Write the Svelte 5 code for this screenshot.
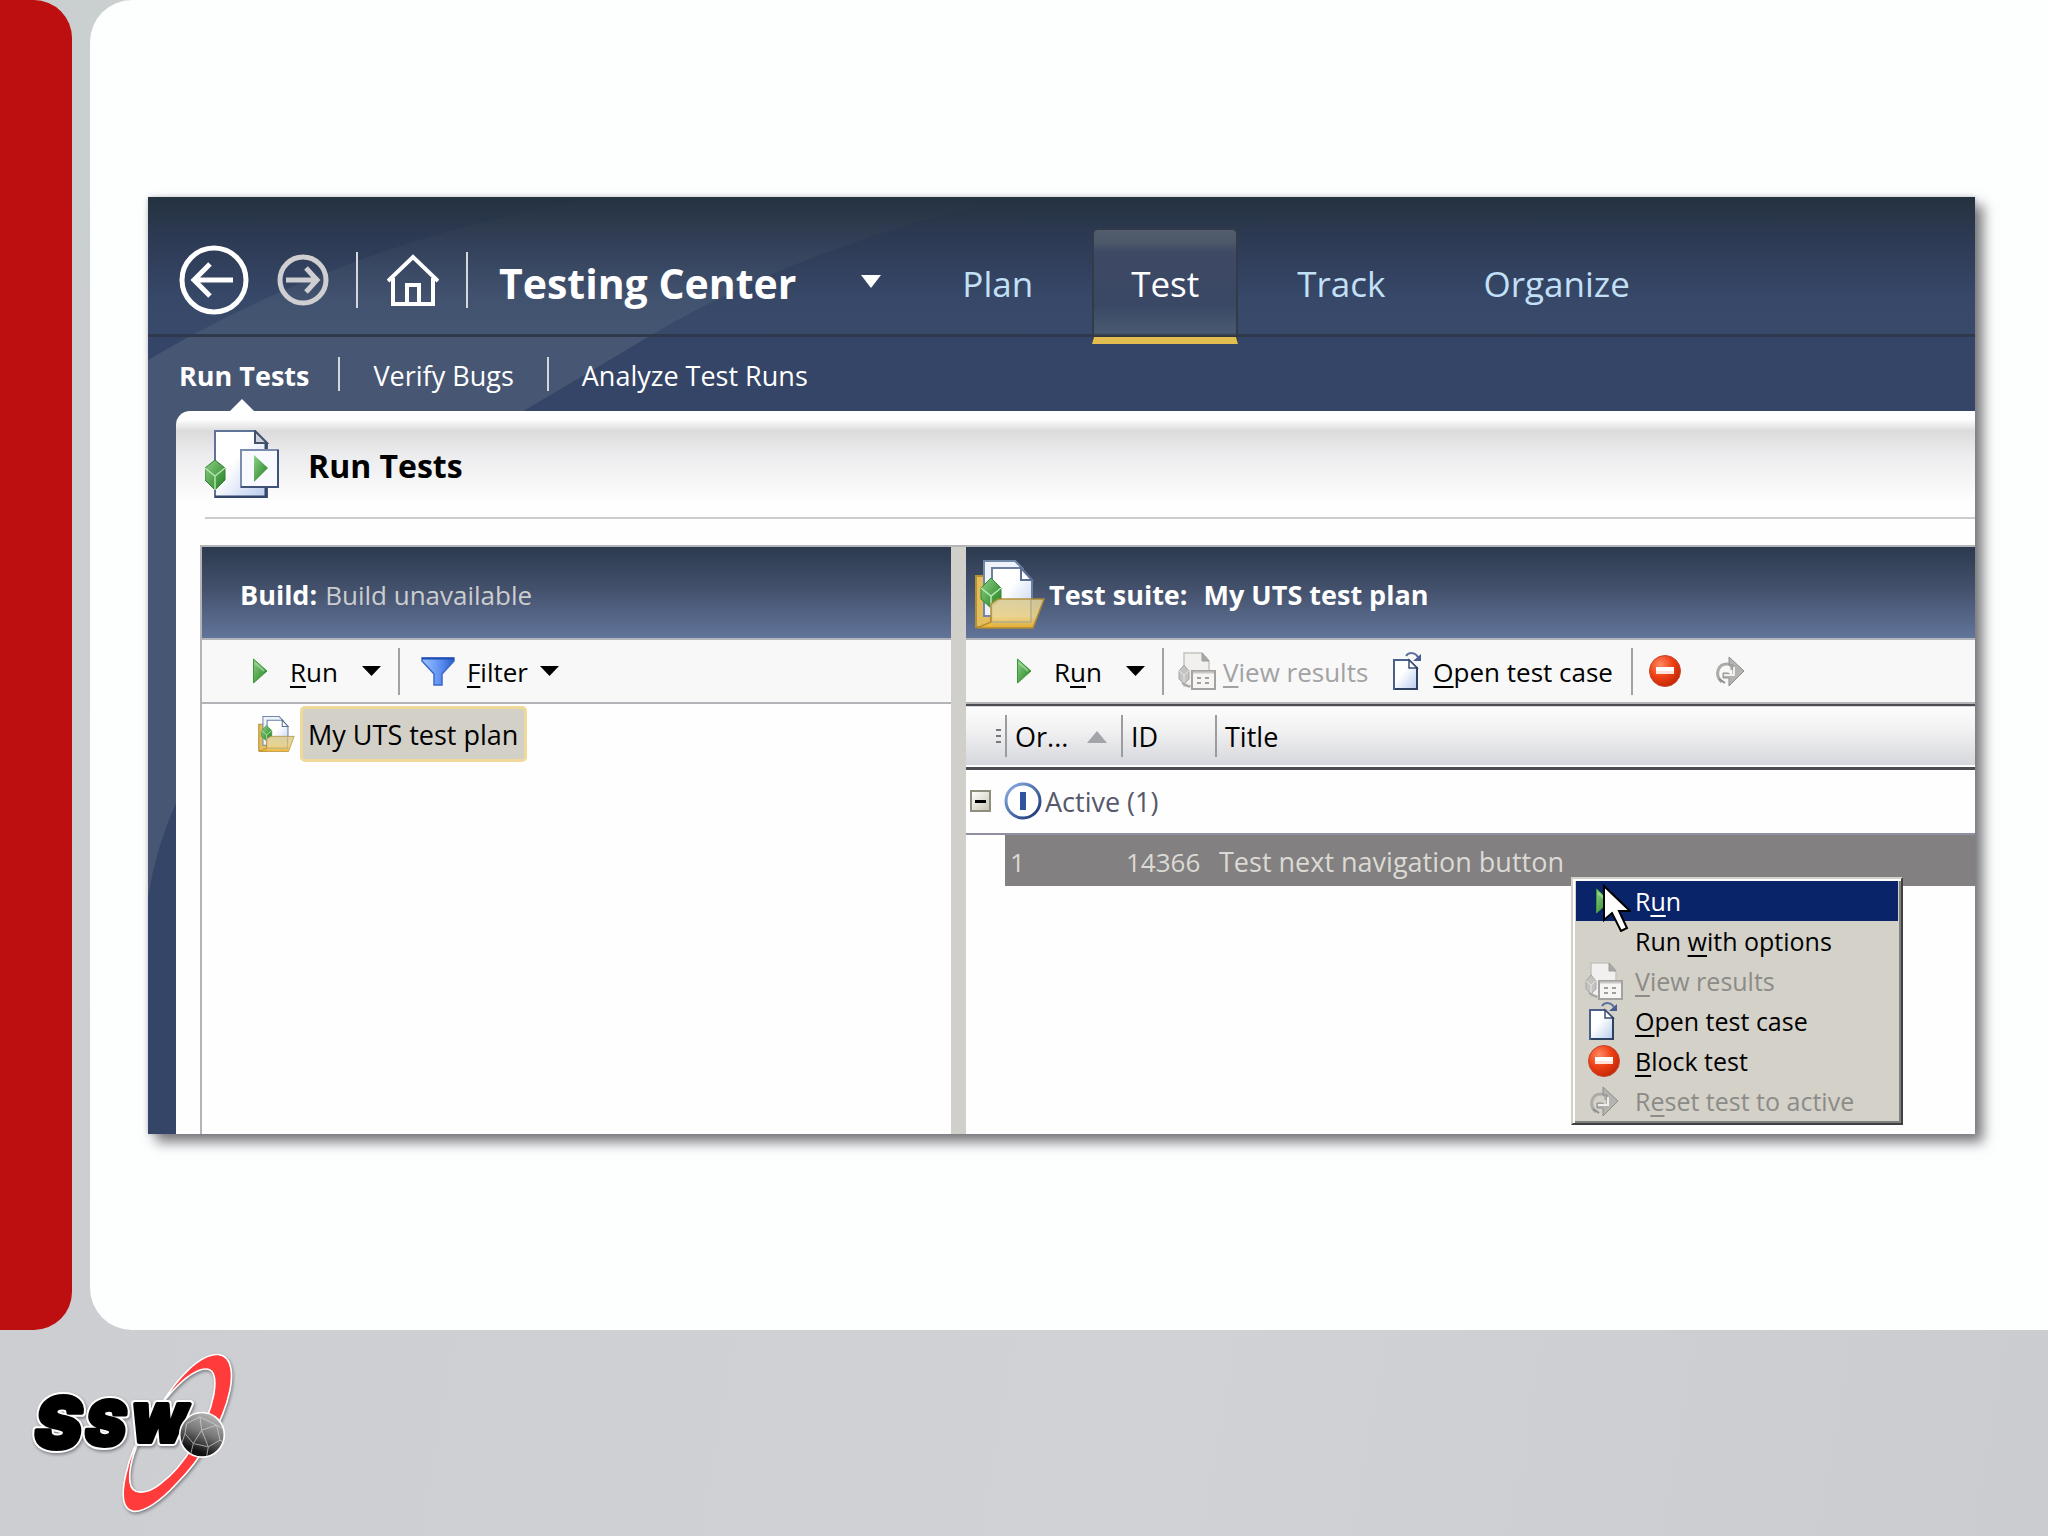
<script>
  const tabs = [
    { label: 'Plan' },
    { label: 'Test', active: true },
    { label: 'Track' },
    { label: 'Organize' }
  ];
  const pages = [
    { label: 'Run Tests', active: true },
    { label: 'Verify Bugs' },
    { label: 'Analyze Test Runs' }
  ];
  // Each menu label is split around its access key.
  const menu = [
    { text: ['R', 'u', 'n'], icon: 'run', selected: true },
    { text: ['Run ', 'w', 'ith options'] },
    { text: ['', 'V', 'iew results'], icon: 'view', disabled: true },
    { text: ['', 'O', 'pen test case'], icon: 'open' },
    { text: ['', 'B', 'lock test'], icon: 'block' },
    { text: ['R', 'e', 'set test to active'], icon: 'reset', disabled: true }
  ];
  const rows = [{ order: 1, id: 14366, title: 'Test next navigation button' }];
</script>

{#snippet play()}
  <svg class="play" viewBox="0 0 15 26" aria-hidden="true">
    <path d="M0.5 1 L14 13 L0.5 25Z" fill="url(#green)" stroke="#3a9a36" />
    <path d="M2 5 L11 13" stroke="#b5e3ae" stroke-width="2" opacity=".6" />
  </svg>
{/snippet}

{#snippet caret()}
  <svg class="caret" viewBox="0 0 19 10" aria-hidden="true"><path d="M0 0H19L9.5 10Z" fill="currentColor" /></svg>
{/snippet}

{#snippet viewIcon()}
  <svg class="i-view" viewBox="0 0 38 38" aria-hidden="true">
    <path d="M6 1H24L31 9V34H6Z" fill="#f1f0ee" stroke="#c3c2c0" stroke-width="1.5" />
    <path d="M24 1V9H31Z" fill="#a9a8a6" stroke="#9d9c9a" />
    <path d="M6 13L11 19V27L6 32L1 27V19Z" fill="#c4c3c1" stroke="#a8a7a5" />
    <path d="M1 19L6 23L11 19M6 23V32" fill="none" stroke="#e6e5e3" />
    <path d="M4 31L12 35" stroke="#a8a7a5" stroke-width="2" />
    <path d="M14 19H37V37H14Z" fill="#f6f5f3" stroke="#a3a2a0" stroke-width="2" />
    <path d="M15 20.5H36" stroke="#c9c8c6" stroke-width="2" />
    <path d="M19 26H23M27 26H31M19 31H23M27 31H31" stroke="#a09f9d" stroke-width="2" />
  </svg>
{/snippet}

{#snippet openIcon()}
  <svg class="i-open" viewBox="0 0 29 38" aria-hidden="true">
    <path d="M1 8H16L24 16V37H1Z" fill="url(#page)" stroke="#4b618a" stroke-width="2" />
    <path d="M16 8V16H24Z" fill="#fff" stroke="#3e4f70" stroke-width="1.5" />
    <path d="M24 15V37H2" fill="none" stroke="#2f4160" stroke-width="2" />
    <path d="M13 4C16 0 22 0 25 5" fill="none" stroke="#5c6f9e" stroke-width="2" />
    <path d="M28 2V9H20Z" fill="#4c5c92" />
  </svg>
{/snippet}

{#snippet blockIcon()}
  <svg class="i-block" viewBox="0 0 32 32" aria-hidden="true">
    <circle cx="16" cy="16" r="15.5" fill="url(#red)" stroke="#c8462c" />
    <path d="M7 12H25V19H7Z" fill="#fff" />
    <path d="M7 16H25V19H7Z" fill="#ffe3d8" />
  </svg>
{/snippet}

{#snippet resetIcon()}
  <svg class="i-reset" viewBox="0 0 30 31" aria-hidden="true">
    <path d="M7 26C-1 19 3 8 12 8C16 8 17 10 17 14" fill="none" stroke="#acaba8" stroke-width="3" />
    <path d="M4 23L10 27" stroke="#8f8e8b" stroke-width="2" />
    <path d="M14 1L29 15L14 30V22H8V17H13L18 20V9H14Z" fill="#b4b3b0" stroke="#8f8e8b" />
    <path d="M9 19H19V11" fill="none" stroke="#efeeec" stroke-width="2" />
  </svg>
{/snippet}

{#snippet folder(cls)}
  <svg class={cls} viewBox="0 0 70 69" aria-hidden="true">
    <path d="M1 16H16V67H1Z" fill="#e4bd5d" stroke="#b58f35" stroke-width="2" />
    <path d="M9 1H40L48 9V56H9Z" fill="#eef3fb" stroke="#7187a8" stroke-width="2" />
    <path d="M17 8H46L57 20V62H17Z" fill="url(#page)" stroke="#6b7f9f" stroke-width="2" />
    <path d="M46 8V20H57Z" fill="#fff" stroke="#5b7092" stroke-width="2" />
    <path d="M16 18L26 28V39L16 48L6 39V28Z" fill="url(#green)" stroke="#2c8a30" />
    <path d="M6 28L16 36L26 28M16 36V48" fill="none" stroke="#b8e8b4" stroke-width="1.5" />
    <path d="M16 44L23 39H69L58 68H2L16 62Z" fill="url(#gold)" stroke="#b38c31" stroke-width="1.5" opacity=".93" />
    <path d="M17 62H56V40" fill="none" stroke="#b3ad8c" stroke-width="1.5" />
  </svg>
{/snippet}

<svg class="defs" aria-hidden="true">
  <defs>
    <linearGradient id="green" x1="0" y1="0" x2="1" y2="1"><stop offset="0" stop-color="#8fd088" /><stop offset="1" stop-color="#1f7f1c" /></linearGradient>
    <linearGradient id="page" x1="0" y1="0" x2="1" y2="1"><stop offset=".4" stop-color="#fff" /><stop offset="1" stop-color="#b9cbee" /></linearGradient>
    <linearGradient id="gold" x1="0" y1="0" x2="0" y2="1"><stop offset="0" stop-color="#d9cd9c" /><stop offset=".6" stop-color="#ead28a" /><stop offset="1" stop-color="#f0b429" /></linearGradient>
    <linearGradient id="blue" x1="0" y1="0" x2="1" y2="0"><stop offset="0" stop-color="#9cc4ff" /><stop offset=".6" stop-color="#5b8df0" /><stop offset="1" stop-color="#2a5ccc" /></linearGradient>
    <radialGradient id="red" cx=".35" cy=".3" r=".8"><stop offset="0" stop-color="#ff8a63" /><stop offset=".5" stop-color="#ee3f14" /><stop offset="1" stop-color="#b92405" /></radialGradient>
    <linearGradient id="ring" x1="0" y1="0" x2="1" y2="1"><stop offset="0" stop-color="#8fb2ea" /><stop offset="1" stop-color="#12306f" /></linearGradient>
    <linearGradient id="globe" x1=".7" y1="0" x2=".3" y2="1"><stop offset="0" stop-color="#b9b9b9" /><stop offset=".45" stop-color="#777" /><stop offset=".85" stop-color="#111" /></linearGradient>
  </defs>
</svg>

<div class="slide">
  <div class="stripe"></div>
  <main class="sheet">
    <section class="window">
      <svg class="swath" viewBox="0 0 870 700" aria-hidden="true">
        <path d="M0 163Q200 44 450 0H864Q650 50 500 140Q440 176 377 213Q120 400 28 606Q8 650 0 700Z" fill="#475773" />
      </svg>

      <header class="bar">
        <button class="round" aria-label="Back">
          <svg viewBox="0 0 70 70" width="70" height="70">
            <circle cx="35" cy="35" r="32" fill="none" stroke="#fff" stroke-width="5" />
            <path d="M54 35H17M31 19L15 35L31 51" fill="none" stroke="#fff" stroke-width="5" />
          </svg>
        </button>
        <button class="round forward" aria-label="Forward">
          <svg viewBox="0 0 52 52" width="52" height="52">
            <circle cx="26" cy="26" r="23" fill="none" stroke="#cfcfd1" stroke-width="5" />
            <path d="M9 26H38M29 14L40 26L29 38" fill="none" stroke="#cfcfd1" stroke-width="5" />
          </svg>
        </button>
        <span class="rule tall"></span>
        <button class="round home" aria-label="Home">
          <svg viewBox="0 0 52 52" width="52" height="52" fill="none" stroke="#fff" stroke-width="4">
            <path d="M1 27L26 3L51 27M6 24V50H46V24" />
            <path d="M20 50V31H32V50" />
          </svg>
        </button>
        <span class="rule tall"></span>
        <h1>Testing Center</h1>
        <button class="switch" aria-label="Switch center">
          <svg viewBox="0 0 20 13" width="20" height="13"><path d="M0 0H20L10 13Z" fill="#fff" /></svg>
        </button>
        <nav class="tabs">
          {#each tabs as tab}
            <button class="tab" class:active={tab.active}>{tab.label}</button>
          {/each}
        </nav>
      </header>

      <nav class="pages">
        {#each pages as page, i}
          {#if i}<span class="rule"></span>{/if}
          <button class="page" class:current={page.active}>{page.label}</button>
        {/each}
      </nav>

      <div class="body">
        <div class="heading">
          <svg class="i-heading" viewBox="0 0 74 68" aria-hidden="true">
            <path d="M10 1H50L62 13V67H10Z" fill="url(#page)" stroke="#5f7396" stroke-width="2" />
            <path d="M61 13V67H10" fill="none" stroke="#33466a" stroke-width="3" />
            <path d="M50 1V13H62Z" fill="#ccd2dc" stroke="#44536c" stroke-width="2" />
            <path d="M10 30L20 38V50L10 60L0 50V38Z" fill="url(#green)" stroke="#2f7f35" />
            <path d="M0 38L10 46L20 38M10 46V60" fill="none" stroke="#b3e0b0" stroke-width="1.5" />
            <path d="M36 20H73V57H36Z" fill="#f8faff" stroke="#7c8cab" stroke-width="2" />
            <path d="M73 20V57H36" fill="none" stroke="#405277" stroke-width="2" />
            <path d="M49 25L63 38L49 52Z" fill="url(#green)" />
          </svg>
          <h2>Run Tests</h2>
        </div>

        <div class="panes">
          <section class="pane left">
            <div class="caption"><b>Build:</b><span>Build unavailable</span></div>
            <div class="toolbar">
              <button class="run">{@render play()}<span><u>R</u>un</span></button>
              <button class="drop" aria-label="Run options">{@render caret()}</button>
              <span class="split"></span>
              <button class="filter">
                <svg class="i-filter" viewBox="0 0 34 29" aria-hidden="true">
                  <path d="M1 1H33V4L21 17V28H13V17L1 4Z" fill="url(#blue)" stroke="#3b68c8" stroke-width="1.5" />
                  <path d="M1 1.5H33" stroke="#1f4fae" stroke-width="2" />
                </svg>
                <span><u>F</u>ilter</span>{@render caret()}
              </button>
            </div>
            <div class="tree">
              {@render folder('i-folder')}
              <button class="node">My UTS test plan</button>
            </div>
          </section>

          <section class="pane right">
            <div class="caption suite">{@render folder('i-suite')}<b>Test suite:</b><b class="name">My UTS test plan</b></div>
            <div class="toolbar">
              <button class="run">{@render play()}<span>R<u>u</u>n</span></button>
              <button class="drop" aria-label="Run options">{@render caret()}</button>
              <span class="split"></span>
              <button class="view" disabled>{@render viewIcon()}<span><u>V</u>iew results</span></button>
              <button class="open">{@render openIcon()}<span><u>O</u>pen test case</span></button>
              <span class="split"></span>
              <button class="block" aria-label="Block test">{@render blockIcon()}</button>
              <button class="reset" aria-label="Reset test to active" disabled>{@render resetIcon()}</button>
            </div>
            <table>
              <colgroup><col class="c-lead" /><col class="c-order" /><col class="c-id" /><col /></colgroup>
              <thead>
                <tr>
                  <td class="grip"><i></i></td>
                  <th scope="col"><div class="cell sort">Or...
                    <svg viewBox="0 0 20 12" width="20" height="12" aria-hidden="true"><path d="M0 12L10 0L20 12Z" fill="#a3a4aa" /></svg>
                  </div></th>
                  <th scope="col"><div class="cell">ID</div></th>
                  <th scope="col"><div class="cell">Title</div></th>
                </tr>
              </thead>
              <tbody>
                <tr class="group">
                  <th colspan="4" scope="rowgroup">
                    <div class="state">
                      <button class="toggle" aria-label="Collapse group"><i></i></button>
                      <svg viewBox="0 0 38 38" width="38" height="38" aria-hidden="true">
                        <circle cx="19" cy="19" r="17" fill="#fff" stroke="url(#ring)" stroke-width="3" />
                        <path d="M19 10V28" stroke="#2f539f" stroke-width="6" />
                      </svg>
                      <span>Active (1)</span>
                    </div>
                  </th>
                </tr>
                {#each rows as row}
                  <tr class="item">
                    <td class="blank"></td>
                    <td>{row.order}</td>
                    <td>{row.id}</td>
                    <td class="title">{row.title}</td>
                  </tr>
                {/each}
              </tbody>
            </table>

            <div class="menu" role="menu">
              {#each menu as item}
                <button role="menuitem" class:selected={item.selected} disabled={item.disabled}>
                  <span class="glyph">
                    {#if item.icon === 'run'}{@render play()}
                    {:else if item.icon === 'view'}{@render viewIcon()}
                    {:else if item.icon === 'open'}{@render openIcon()}
                    {:else if item.icon === 'block'}{@render blockIcon()}
                    {:else if item.icon === 'reset'}{@render resetIcon()}
                    {/if}
                  </span>
                  <span>{item.text[0]}<u>{item.text[1]}</u>{item.text[2]}</span>
                </button>
              {/each}
              <svg class="pointer" viewBox="0 0 28 48" aria-hidden="true">
                <path d="M1 2V36L9 29L18 47L24 44L16 27H27Z" fill="#fff" stroke="#000" stroke-width="2" />
              </svg>
            </div>
          </section>
        </div>
      </div>
    </section>
  </main>

  <footer>
    <svg class="logo" viewBox="84 150 624 500" role="img" aria-label="SSW">
      <g class="lift">
        <path
          d="M480 318C530 235 600 160 655 163C700 168 698 230 690 270C670 370 600 480 530 550C480 605 430 638 398 633C365 625 365 575 378 520C390 465 410 420 440 375C405 440 385 500 390 545C395 590 445 580 480 552C550 500 620 390 642 280C650 225 640 200 605 208C565 220 520 265 480 318Z"
          fill="#ff3b3b" stroke="#fff" stroke-width="5" />
      </g>
      {#each ['halo', 'ink'] as layer}
        <g class="word {layer}" class:lift={layer === 'halo'} aria-hidden={layer === 'halo'}>
          <text y="443"><tspan x="104" font-size="212">S</tspan><tspan x="256" y="436" font-size="182">S</tspan><tspan x="390" y="427" font-size="158">W</tspan></text>
        </g>
      {/each}
      <circle cx="606" cy="404" r="67" fill="url(#globe)" stroke="#fff" stroke-width="5" />
      <g fill="none" stroke="#d4d4d4" stroke-width="3" opacity=".7">
        <path d="M560 370L600 350L650 375L660 420L625 440L580 430L555 400Z" />
        <path d="M600 350L605 390L580 430M605 390L650 375M625 440L620 468M580 430L572 462M555 400L545 430M625 440L605 390M650 375L668 385M660 420L670 425" />
      </g>
    </svg>
  </footer>
</div>

<style>
  :global(body) { margin: 0; background: linear-gradient(100deg, #c9d0cf 0, #cdced2 12%, #d1d2d6 60%, #cbccd0 100%); }
  * { box-sizing: border-box; }
  button { border: 0; margin: 0; padding: 0; background: none; color: inherit; font: inherit; text-align: left; white-space: nowrap; }
  svg { display: block; flex: none; }
  h1, h2 { margin: 0; }
  u { text-decoration-thickness: 2px; text-underline-offset: 4px; text-decoration-skip-ink: none; }
  .defs { position: absolute; width: 0; height: 0; }

  .slide {
    display: grid; grid-template-columns: 72px 1fr; grid-template-rows: 1fr auto; column-gap: 18px;
    min-height: 100vh; font: 27px/36px "Open Sans", "Noto Sans", sans-serif; color: #000;
  }
  .stripe { background: #bd0f10; border-radius: 0 38px 38px 0; }
  .sheet { display: grid; padding: 197px 73px 196px 58px; background: #fdfefe; border-radius: 42px 0 0 42px; min-width: 0; }
  .window {
    position: relative; display: flex; flex-direction: column; min-width: 0; background: #354567;
    box-shadow: 8px 8px 12px #77777b, 0 0 5px #c9ccd2;
  }
  .swath { position: absolute; left: 0; top: 0; width: 870px; height: 700px; }

  .bar {
    position: relative; display: flex; align-items: center; height: 140px; padding: 29px 0 0 31px;
    border-bottom: 3px solid #30394c; color: #fff;
    background: linear-gradient(#24323f, rgba(43, 55, 78, .75) 32%, rgba(58, 76, 107, .4) 75%, rgba(64, 84, 116, .3));
  }
  .forward { margin-left: 28px; }
  .rule { width: 2px; height: 34px; background: #d5d7dc; }
  .rule.tall { height: 56px; margin-left: 27px; }
  .home { margin-left: 29px; }
  h1 { margin-left: 31px; padding-top: 6px; font-size: 41px; line-height: 50px; font-weight: 700; }
  .switch { margin-left: 65px; padding-top: 2px; }
  .tabs { display: flex; gap: 20px; align-self: flex-end; margin: 0 0 -10px 42px; }
  .tab { height: 116px; padding: 0 37px; font-size: 35px; color: #c3e0f7; border: 2px solid transparent; border-bottom: 7px solid transparent; }
  .tab.active {
    color: #fff; border-radius: 6px 6px 0 0; border-color: #333b48; border-bottom-color: #e2bd50;
    background: linear-gradient(#525e6d 0, #4c5869 12%, #3e4964 20%, #3a4865 70%, #485a70 96%, #2f3642 99%);
  }

  .pages { position: relative; display: flex; align-items: center; gap: 33px; height: 74px; padding-left: 31px; color: #fff; }
  .page { height: 74px; padding-top: 4px; }
  .current { position: relative; margin-right: -4px; font-weight: 700; }
  .current::after {
    content: ""; position: absolute; left: 50%; bottom: 0; margin-left: -14px;
    border: 12px solid transparent; border-top: 0; border-bottom-color: #fff;
  }

  .body {
    position: relative; flex: 1; display: flex; flex-direction: column; margin-left: 28px; padding-left: 24px;
    border-radius: 14px 0 0 0; background: #fefefe linear-gradient(#fff 0, #fff 8px, #dcdbdc 20px, #ececee 44px, #fefefe 92px) no-repeat 0 0 / 100% 100px;
  }
  .heading { display: flex; align-items: center; gap: 29px; height: 108px; margin-left: 5px; border-bottom: 2px solid #cbcccc; }
  h2 { padding-top: 4px; font-size: 32px; line-height: 40px; font-weight: 700; }
  .i-heading { width: 74px; height: 68px; }

  .panes { flex: 1; display: grid; grid-template-columns: 766px 1fr; margin-top: 26px; border-top: 2px solid #b3b4b8; }
  .pane { position: relative; min-width: 0; }
  .left { border-left: 2px solid #b3b4b8; border-right: 15px solid #d1cfc9; }
  .caption {
    display: flex; align-items: center; gap: 8px; height: 93px; padding: 4px 0 0 38px; color: #fff;
    border-bottom: 2px solid #b3b4b8; background: linear-gradient(#2c3a4f, #43506b 45%, #61759a);
  }
  .caption span { font-size: 26px; color: #cccdcf; }
  .suite { gap: 4px; padding-left: 9px; }
  .name { margin-left: 12px; }
  .i-suite { width: 70px; height: 69px; }
  .toolbar { display: flex; align-items: center; height: 64px; padding-left: 51px; background: #f8f8f8; border-bottom: 2px solid #b3b4b8; font-size: 26px; }
  .toolbar button { display: flex; align-items: center; }
  .toolbar button span { padding-top: 2px; }
  .play { width: 15px; height: 26px; }
  .caret { width: 19px; height: 10px; }
  .run { gap: 22px; }
  .toolbar .drop { margin: 0 17px 0 24px; }
  .split { width: 2px; height: 47px; background: #a2a2a4; }
  .toolbar .filter { margin-left: 21px; gap: 12px; }
  .i-filter { width: 34px; height: 29px; }
  .tree { display: flex; align-items: center; gap: 5px; padding: 2px 0 0 56px; }
  .i-folder { width: 37px; height: 36px; }
  .node { height: 56px; padding: 2px 6px 0 5px; background: #d3d0c8; border: 3px solid #efd999; border-radius: 5px; }

  .i-view { width: 38px; height: 38px; }
  .i-open { width: 29px; height: 38px; }
  .i-block { width: 32px; height: 32px; }
  .i-reset { width: 30px; height: 31px; }
  .toolbar .view { gap: 7px; margin-left: 14px; color: #a2a2a4; }
  .toolbar .open { gap: 11px; margin: 0 18px 0 25px; }
  .block { margin-left: 16px; }
  .reset { margin-left: 34px; }

  table { width: 100%; border-collapse: collapse; table-layout: fixed; }
  .c-lead { width: 39px; }
  .c-order { width: 116px; }
  .c-id { width: 94px; }
  th, td { padding: 0; font-weight: 400; text-align: left; }
  thead tr { height: 63px; background: linear-gradient(#fdfdfd, #f1f1f2 40%, #d6d7dc); border-top: 2px solid #4c4d52; border-bottom: 3px solid #4c4d52; }
  .grip i { display: block; width: 5px; height: 14px; margin-left: 30px; background: repeating-linear-gradient(#77787e 0 2px, transparent 2px 6px); }
  .cell { display: flex; align-items: center; justify-content: space-between; height: 42px; padding: 2px 14px 0 8px; border-left: 2px solid #9b9ca2; }
  .group { height: 66px; border-bottom: 2px solid #8e90a2; }
  .state { display: flex; align-items: center; padding-left: 4px; color: #55596b; }
  .state svg { margin-left: 13px; }
  .state span { margin-left: 3px; padding-top: 2px; }
  .toggle { display: grid; place-items: center; width: 21px; height: 22px; border: 2px solid #8d8f7c; background: linear-gradient(135deg, #fff, #c8c5b4); }
  .toggle i { width: 11px; height: 3px; background: #000; }
  .item { height: 52px; }
  .item td { padding: 2px 0 0 5px; background: #828081; color: #dcdad4; font-size: 26px; }
  .item .blank { background: none; }
  .item .title { padding-left: 4px; font-size: 27px; }

  .menu {
    position: absolute; left: 605px; top: 330px; display: flex; flex-direction: column; width: 332px;
    background: #d4d1c9; border: 2px solid #d4d1c9; border-right-color: #404040; border-bottom-color: #404040;
    box-shadow: inset 2px 2px #fff, inset -2px -2px #808080; padding: 2px 3px 2px 3px;
  }
  .menu button { display: flex; align-items: center; height: 40px; font-size: 25px; line-height: 32px; }
  .menu .selected { background: #0a246a; color: #fff; }
  .menu button:disabled { color: #8c8b87; }
  .glyph { display: grid; place-items: center; width: 59px; padding-right: 4px; }
  .pointer { position: absolute; left: 30px; top: 5px; width: 28px; height: 48px; }

  footer { grid-column: 1 / -1; height: 206px; padding: 20px 0 0 28px; }
  .logo { width: 208px; height: 167px; }
  .lift { filter: drop-shadow(3px 5px 4px rgba(60, 60, 70, .55)); }
  .word { font-family: Inter, "Liberation Sans", sans-serif; font-weight: 900; font-style: italic; stroke-linejoin: round; }
  .halo { fill: #fff; stroke: #fff; stroke-width: 24px; }
  .ink { fill: #000; stroke: #000; stroke-width: 12px; }
</style>
